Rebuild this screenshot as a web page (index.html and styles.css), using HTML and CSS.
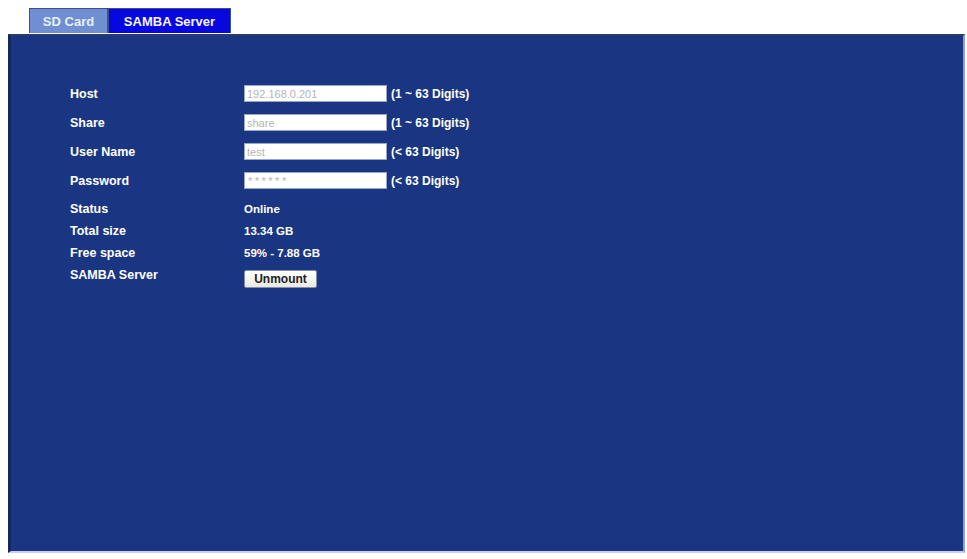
FILE: index.html
```html
<!DOCTYPE html>
<html>
<head>
<meta charset="utf-8">
<link rel="stylesheet" href="styles.css">
</head>
<body>
<div class="tabs">
  <div class="tab tab-off">SD Card</div>
  <div class="tab tab-on">SAMBA Server</div>
</div>
<div class="panel">
  <div class="form">
    <div class="row row-input">
      <div class="label">Host</div>
      <div class="field"><div class="input">192.168.0.201</div><span class="hint">(1 ~ 63 Digits)</span></div>
    </div>
    <div class="row row-input">
      <div class="label">Share</div>
      <div class="field"><div class="input">share</div><span class="hint">(1 ~ 63 Digits)</span></div>
    </div>
    <div class="row row-input">
      <div class="label">User Name</div>
      <div class="field"><div class="input">test</div><span class="hint">(&lt; 63 Digits)</span></div>
    </div>
    <div class="row row-input">
      <div class="label">Password</div>
      <div class="field"><div class="input pw">******</div><span class="hint">(&lt; 63 Digits)</span></div>
    </div>
    <div class="row row-text first-text">
      <div class="label">Status</div>
      <div class="field value">Online</div>
    </div>
    <div class="row row-text">
      <div class="label">Total size</div>
      <div class="field value">13.34 GB</div>
    </div>
    <div class="row row-text">
      <div class="label">Free space</div>
      <div class="field value">59% - 7.88 GB</div>
    </div>
    <div class="row row-text">
      <div class="label">SAMBA Server</div>
      <div class="field"><button class="btn">Unmount</button></div>
    </div>
  </div>
</div>
</body>
</html>
```
FILE: styles.css
```css
html, body { margin: 0; padding: 0; background: #ffffff; }
body {
  font-family: "Liberation Sans", Arial, sans-serif;
  width: 967px; height: 559px; overflow: hidden;
}
.tabs {
  display: flex;
  margin: 8px 0 0 29px;
  height: 25px;
}
.tab {
  font-size: 13px;
  font-weight: bold;
  color: #f4f6ff;
  display: flex;
  align-items: center;
  justify-content: center;
  border: 1px solid #3c4f86;
  border-bottom: none;
  box-sizing: border-box;
}
.tab-off { width: 79px; background: #6f8fd2; color: #e8eefc; }
.tab-on { width: 123px; background: #0707e0; }
.panel {
  margin: 1px 2px 0 8px;
  height: 519px;
  background: #1a3682;
  border-top: 2px solid #2a3b6a;
  border-left: 3px solid #14275e;
  border-right: 2px solid #8aa0d8;
  border-bottom: 2px solid #c8d2ee;
  box-sizing: border-box;
  padding: 43px 0 0 59px;
}
.form { display: flex; flex-direction: column; }
.row { display: flex; align-items: center; color: #ffffff; font-size: 12px; font-weight: bold; }
.row-input { height: 29px; }
.row-text { height: 22px; }
.first-text { margin-top: 3px; }
.label { width: 174px; font-size: 12.5px; }
.field { display: flex; align-items: center; }
.input {
  width: 143px; height: 17px;
  box-sizing: border-box;
  background: #ffffff;
  border: 1px solid #9aa6c8;
  color: #b4b4b4;
  font-size: 11px;
  font-weight: normal;
  padding: 2px 2px;
  line-height: 12px;
}
.input.pw { font-size: 11px; letter-spacing: 2.5px; padding-left: 3px; }
.hint { margin-left: 4px; font-size: 12px; }
.value { font-size: 11.5px; }
.btn {
  font-family: "Liberation Sans", Arial, sans-serif;
  font-size: 12px; font-weight: bold;
  color: #222;
  width: 73px; height: 18px;
  margin-top: 8px;
  background: linear-gradient(#ffffff, #ece9e0);
  border: 1px solid #8090a8;
  border-radius: 2px;
  padding: 0;
}
```
